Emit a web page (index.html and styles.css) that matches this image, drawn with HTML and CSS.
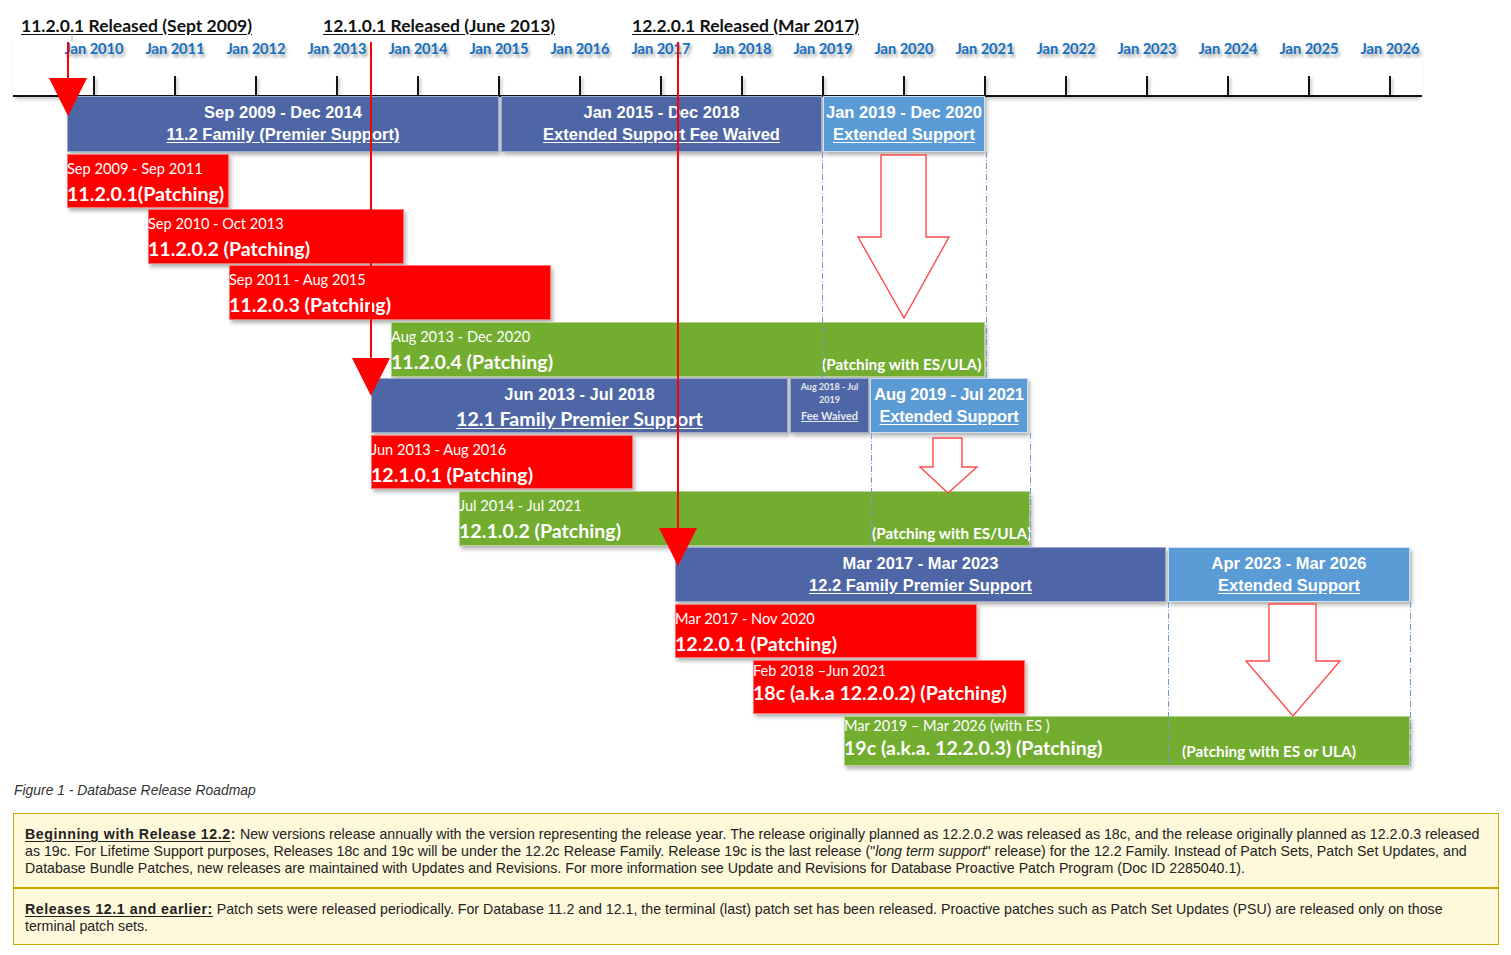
FILE: index.html
```html
<!DOCTYPE html>
<html lang="en">
<head>
<meta charset="utf-8">
<title>Database Release Roadmap</title>
<link rel="stylesheet" href="styles.css">
</head>
<body>
<div class="page">
  <div class="chart">
    <div class="release" style="left:21px">11.2.0.1 Released (Sept 2009)</div>
    <div class="release" style="left:323px">12.1.0.1 Released (June 2013)</div>
    <div class="release" style="left:632px">12.2.0.1 Released (Mar 2017)</div>

    <div class="scale">
      <div class="years">
        <div class="year"><span class="ylabel">Jan 2010</span><span class="tick"></span></div>
        <div class="year"><span class="ylabel">Jan 2011</span><span class="tick"></span></div>
        <div class="year"><span class="ylabel">Jan 2012</span><span class="tick"></span></div>
        <div class="year"><span class="ylabel">Jan 2013</span><span class="tick"></span></div>
        <div class="year"><span class="ylabel">Jan 2014</span><span class="tick"></span></div>
        <div class="year"><span class="ylabel">Jan 2015</span><span class="tick"></span></div>
        <div class="year"><span class="ylabel">Jan 2016</span><span class="tick"></span></div>
        <div class="year"><span class="ylabel">Jan 2017</span><span class="tick"></span></div>
        <div class="year"><span class="ylabel">Jan 2018</span><span class="tick"></span></div>
        <div class="year"><span class="ylabel">Jan 2019</span><span class="tick"></span></div>
        <div class="year"><span class="ylabel">Jan 2020</span><span class="tick"></span></div>
        <div class="year"><span class="ylabel">Jan 2021</span><span class="tick"></span></div>
        <div class="year"><span class="ylabel">Jan 2022</span><span class="tick"></span></div>
        <div class="year"><span class="ylabel">Jan 2023</span><span class="tick"></span></div>
        <div class="year"><span class="ylabel">Jan 2024</span><span class="tick"></span></div>
        <div class="year"><span class="ylabel">Jan 2025</span><span class="tick"></span></div>
        <div class="year"><span class="ylabel">Jan 2026</span><span class="tick"></span></div>
      </div>
    </div>

    <!-- 11.2 family -->
    <div class="bar family" style="left:67px;top:96px;width:432px;height:56px">
      <div class="l1">Sep 2009 - Dec 2014</div>
      <div class="l2"><span class="ul">11.2 Family (Premier Support)</span></div>
    </div>
    <div class="bar family" style="left:501px;top:96px;width:321px;height:56px">
      <div class="l1">Jan 2015 - Dec 2018</div>
      <div class="l2"><span class="ul">Extended Support Fee Waived</span></div>
    </div>
    <div class="bar family ext" style="left:823px;top:96px;width:162px;height:56px">
      <div class="l1">Jan 2019 - Dec 2020</div>
      <div class="l2"><span class="ul">Extended Support</span></div>
    </div>

    <div class="bar patch red" style="left:67px;top:154px;width:162px;height:54px">
      <div class="dates">Sep 2009 - Sep 2011</div>
      <div class="name">11.2.0.1(Patching)</div>
    </div>
    <div class="bar patch red" style="left:148px;top:209px;width:256px;height:55px">
      <div class="dates">Sep 2010 - Oct 2013</div>
      <div class="name">11.2.0.2 (Patching)</div>
    </div>
    <div class="bar patch red" style="left:229px;top:265px;width:322px;height:55px">
      <div class="dates">Sep 2011 - Aug 2015</div>
      <div class="name">11.2.0.3 (Patching)</div>
    </div>
    <div class="bar patch green split" style="left:391px;top:322px;width:594px;height:55px">
      <div class="main" style="width:431px">
        <div class="dates">Aug 2013 - Dec 2020</div>
        <div class="name">11.2.0.4 (Patching)</div>
      </div>
      <div class="es">(Patching with ES/ULA)</div>
    </div>

    <!-- 12.1 family -->
    <div class="bar family" style="left:371px;top:378px;width:417px;height:55px">
      <div class="l1">Jun 2013 - Jul 2018</div>
      <div class="l2 cal"><span class="ul">12.1 Family Premier Support</span></div>
    </div>
    <div class="bar mini" style="left:790px;top:378px;width:79px;height:55px">
      <div class="d">Aug 2018 - Jul 2019</div>
      <div class="fw">Fee Waived</div>
    </div>
    <div class="bar family ext" style="left:870px;top:378px;width:158px;height:55px">
      <div class="l1 tight">Aug 2019 - Jul 2021</div>
      <div class="l2 tight"><span class="ul">Extended Support</span></div>
    </div>

    <div class="bar patch red" style="left:371px;top:435px;width:262px;height:54px">
      <div class="dates">Jun 2013 - Aug 2016</div>
      <div class="name">12.1.0.1 (Patching)</div>
    </div>
    <div class="bar patch green split" style="left:459px;top:491px;width:571px;height:55px">
      <div class="main" style="width:413px">
        <div class="dates">Jul 2014 - Jul 2021</div>
        <div class="name">12.1.0.2 (Patching)</div>
      </div>
      <div class="es">(Patching with ES/ULA)</div>
    </div>

    <!-- 12.2 family -->
    <div class="bar family" style="left:675px;top:547px;width:491px;height:55px">
      <div class="l1">Mar 2017 - Mar 2023</div>
      <div class="l2"><span class="ul">12.2 Family Premier Support</span></div>
    </div>
    <div class="bar family ext" style="left:1168px;top:547px;width:242px;height:55px">
      <div class="l1">Apr 2023 - Mar 2026</div>
      <div class="l2"><span class="ul">Extended Support</span></div>
    </div>

    <div class="bar patch red" style="left:675px;top:604px;width:302px;height:54px">
      <div class="dates">Mar 2017 - Nov 2020</div>
      <div class="name">12.2.0.1 (Patching)</div>
    </div>
    <div class="bar patch red snug" style="left:753px;top:660px;width:272px;height:54px">
      <div class="dates">Feb 2018 –Jun 2021</div>
      <div class="name">18c (a.k.a 12.2.0.2) (Patching)</div>
    </div>
    <div class="bar patch green split snug last" style="left:844px;top:716px;width:566px;height:50px">
      <div class="main" style="width:338px">
        <div class="dates">Mar 2019 – Mar 2026 (with ES )</div>
        <div class="name">19c (a.k.a. 12.2.0.3) (Patching)</div>
      </div>
      <div class="es">(Patching with ES or ULA)</div>
    </div>

    <svg class="overlay" width="1511" height="776" viewBox="0 0 1511 776">
      <g class="dash">
        <line x1="822.5" y1="152" x2="822.5" y2="378"/>
        <line x1="986.5" y1="152" x2="986.5" y2="378"/>
        <line x1="871.5" y1="433" x2="871.5" y2="546"/>
        <line x1="1030.5" y1="433" x2="1030.5" y2="546"/>
        <line x1="1168.5" y1="602" x2="1168.5" y2="766"/>
        <line x1="1410.5" y1="602" x2="1410.5" y2="766"/>
      </g>
      <g class="outline">
        <polygon points="881,155 926,155 926,237 949,237 904,318 858,237 881,237"/>
        <polygon points="933,438 962,438 962,467 977,467 948,493 920,467 933,467"/>
        <polygon points="1269,604 1316,604 1316,661 1340,661 1293,716 1246,661 1269,661"/>
      </g>
      <line class="tag" x1="72" y1="33" x2="72" y2="42"/>
      <g class="rel">
        <line x1="68" y1="42" x2="68" y2="80"/>
        <polygon points="49,78 87,78 68,116"/>
        <line x1="371" y1="42" x2="371" y2="360"/>
        <polygon points="352,358 390,358 371,396"/>
        <line x1="678" y1="42" x2="678" y2="530"/>
        <polygon points="659,528 697,528 678,566"/>
      </g>
    </svg>
  </div>

  <p class="caption">Figure 1 - Database Release Roadmap</p>

  <div class="notes">
    <div class="note"><b class="lead"><span class="ul">Beginning with Release 12.2</span>:</b> New versions release annually with the version representing the release year. The release originally planned as 12.2.0.2 was released as 18c, and the release originally planned as 12.2.0.3 released<br>as 19c. For Lifetime Support purposes, Releases 18c and 19c will be under the 12.2c Release Family. Release 19c is the last release ("<i>long term support</i>" release) for the 12.2 Family. Instead of Patch Sets, Patch Set Updates, and<br>Database Bundle Patches, new releases are maintained with Updates and Revisions. For more information see Update and Revisions for Database Proactive Patch Program (Doc ID 2285040.1).</div>
    <div class="note"><b class="lead ul">Releases 12.1 and earlier:</b> Patch sets were released periodically. For Database 11.2 and 12.1, the terminal (last) patch set has been released. Proactive patches such as Patch Set Updates (PSU) are released only on those<br>terminal patch sets.</div>
  </div>
</div>
</body>
</html>
```

FILE: styles.css
```css
* { box-sizing: border-box; }

body {
  margin: 0;
  background: #ffffff;
}

.page {
  width: 1511px;
}

.chart {
  position: relative;
  height: 776px;
}

.ul { text-decoration: underline; text-underline-offset: 2px; }

.release {
  position: absolute;
  top: 15px;
  font: 700 17.5px/22px Lato, "Liberation Sans", sans-serif;
  color: #111;
  text-decoration: underline;
  text-underline-offset: 2px;
  white-space: nowrap;
}

.scale {
  position: absolute;
  left: 13px;
  top: 38px;
  width: 1409px;
  height: 59px;
  border-bottom: 2px solid #111;
  box-shadow: 0 4px 4px -2px rgba(0, 0, 0, 0.25);
}

.years {
  display: flex;
  height: 100%;
  margin-left: 40.5px;
}

.year {
  flex: none;
  width: 81px;
  display: flex;
  flex-direction: column;
  align-items: center;
}

.ylabel {
  font: 700 14.6px/22px Lato, "Liberation Sans", sans-serif;
  color: #1470c2;
  text-shadow: 2px 3px 3px rgba(0, 0, 0, 0.35);
  white-space: nowrap;
}

.tick {
  margin-top: auto;
  width: 2px;
  height: 19px;
  background: #111;
  box-shadow: 2px 2px 3px rgba(0, 0, 0, 0.25);
}

.bar {
  position: absolute;
  color: #ffffff;
  box-shadow: 2px 3px 4px rgba(0, 0, 0, 0.3);
  outline: 1px solid rgba(255, 255, 255, 0.45);
  outline-offset: -1px;
}

.family {
  background: #4e66a5;
  text-align: center;
  padding-top: 5px;
  font: 700 16.5px/22px "Liberation Sans", Arial, sans-serif;
  white-space: nowrap;
}

.family .l2.cal {
  font: 700 19.6px/30px Lato, sans-serif;
  margin-top: -1px;
}

.family .tight { letter-spacing: -0.2px; }

.ext {
  background: #5b9bd5;
  outline: 1.5px solid rgba(255, 255, 255, 0.7);
}

.patch {
  padding-top: 5px;
  font-family: Lato, "Liberation Sans", sans-serif;
}

.patch .dates {
  font: 400 14.6px/20px Lato, sans-serif;
  white-space: nowrap;
}

.patch .name {
  font: 700 19.6px/30px Lato, sans-serif;
  white-space: nowrap;
}

.patch.snug { padding-top: 1px; }
.patch.snug .name { line-height: 24px; }
.patch.last { padding-top: 0; }

.red { background: #ff0000; }
.green { background: #72ad30; }

.split { display: flex; }

.split .main { flex: none; }

.es {
  align-self: flex-end;
  padding-bottom: 3px;
  font: 700 15.3px/20px Lato, sans-serif;
  white-space: nowrap;
}

.last .es {
  padding-bottom: 5px;
}

.mini {
  background: #4e66a5;
  color: #e6e8f0;
  text-align: center;
  padding: 2px 8px 0;
  font-family: Lato, sans-serif;
}

.mini .d {
  font: 700 9px/13px Lato, sans-serif;
}

.mini .fw {
  margin-top: 2px;
  font: 700 11px/15px Lato, sans-serif;
  text-decoration: underline;
}

.overlay {
  position: absolute;
  left: 0;
  top: 0;
  pointer-events: none;
}

.dash line {
  stroke: #6e9bd3;
  stroke-width: 1;
  stroke-dasharray: 6 2 1 2;
}

.outline polygon {
  fill: #ffffff;
  stroke: #ff4a4a;
  stroke-width: 1.4;
}

.tag {
  stroke: #b0b0b0;
  stroke-width: 1;
}

.rel line {
  stroke: #ff0000;
  stroke-width: 2;
}

.rel polygon {
  fill: #ff0000;
}

.caption {
  margin: 4px 0 0;
  padding-left: 14px;
  font: italic 13.9px/20px "Liberation Sans", Arial, sans-serif;
  color: #333;
}

.notes {
  margin: 13px 0 0 13px;
  width: 1486px;
  border: 1px solid #c8a800;
  background: #fff9db;
}

.note {
  padding: 12px 4px 10px 11px;
  font: 14.2px/17px "Liberation Sans", Arial, sans-serif;
  color: #222;
  white-space: nowrap;
}

.note .lead {
  letter-spacing: 0.55px;
}

.note + .note {
  border-top: 2px solid #c8a800;
  padding-bottom: 9px;
}
```
